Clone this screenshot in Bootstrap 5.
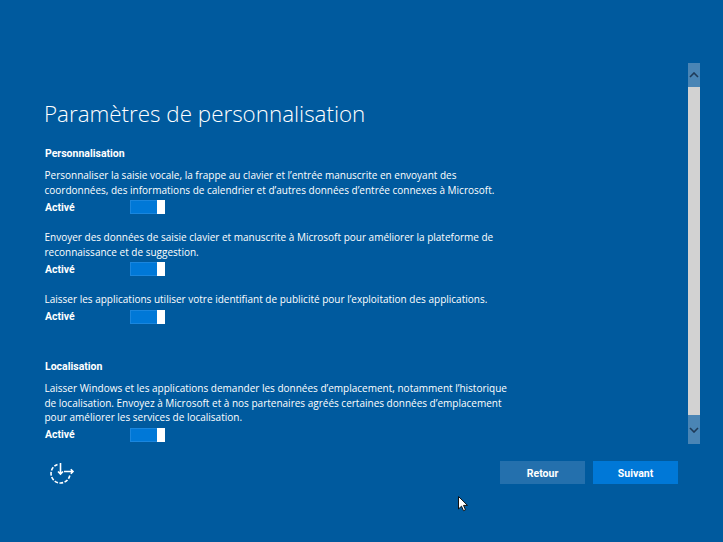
<!DOCTYPE html>
<html lang="fr"><head><meta charset="utf-8"><title>Paramètres</title>
<link href="https://cdn.jsdelivr.net/npm/bootstrap@5.3.0/dist/css/bootstrap.min.css" rel="stylesheet">
<style>
html,body{height:542px;overflow:hidden}
body{background:#005a9e;color:#fff;font-family:"Open Sans",sans-serif;font-size:10px;line-height:14.5px}
.oobe{height:542px;padding:63px 23px 0 44px}
.upper{height:381px}
.pane{width:644px;padding-top:36px}
.ttl{font-size:22.4px;font-weight:300;line-height:30px;margin:0 0 17px;white-space:nowrap}
.sect{font-family:Roboto,sans-serif;font-size:10.5px;font-weight:700;line-height:15px;margin:0 0 7px;padding-left:1px}
.sect.gap{margin-bottom:7.500px}
.para{margin:0 0 3px;white-space:nowrap;padding-left:.5px}
.opt{height:14px;margin-bottom:16px}
.opt b{width:86px;font-family:Roboto,sans-serif;font-size:10.5px;padding:2px 0 0 1px}
.tog{width:35px;height:14px;border:1px solid #1a86de;background:#0078d7;padding:0}
.tog i{width:8px;height:14px;margin:-1px;background:#fff;display:block}
.tail{margin-bottom:35px}
.sbar{width:12px;background:#d2d2d2}
.sbtn{height:24px;background:#4a85b5;color:#1f3a57}
.sbtn.low{height:29px}
.sthumb{background:#d2d2d2}
.foot{height:23px;margin-top:17px;padding:0 22px 0 6px}
.act{width:85px;height:23px;border:0;border-radius:0;color:#fff;font-family:Roboto,sans-serif;font-size:10.5px;font-weight:700;padding:2px 0 0;line-height:21px}
.act.back,.act.back:hover{background:#2470ad;color:#fff}
.act.next,.act.next:hover{background:#0078d7;color:#fff}
.ptr{position:absolute;left:458px;top:496px}
</style></head>
<body class="position-relative">
<div class="oobe d-flex flex-column">
  <div class="upper d-flex">
    <div class="pane">
      <h1 class="ttl">Paramètres de personnalisation</h1>
      <div class="sect">Personnalisation</div>
      <p class="para">Personnaliser la saisie vocale, la frappe au clavier et l’entrée manuscrite en envoyant des<br>coordonnées, des informations de calendrier et d’autres données d’entrée connexes à Microsoft.</p>
      <div class="opt d-flex align-items-center"><b>Activé</b><span class="tog d-flex justify-content-end"><i></i></span></div>
      <p class="para">Envoyer des données de saisie clavier et manuscrite à Microsoft pour améliorer la plateforme de<br>reconnaissance et de suggestion.</p>
      <div class="opt d-flex align-items-center"><b>Activé</b><span class="tog d-flex justify-content-end"><i></i></span></div>
      <p class="para">Laisser les applications utiliser votre identifiant de publicité pour l’exploitation des applications.</p>
      <div class="opt tail d-flex align-items-center"><b>Activé</b><span class="tog d-flex justify-content-end"><i></i></span></div>
      <div class="sect gap">Localisation</div>
      <p class="para">Laisser Windows et les applications demander les données d’emplacement, notamment l’historique<br>de localisation. Envoyez à Microsoft et à nos partenaires agréés certaines données d’emplacement<br>pour améliorer les services de localisation.</p>
      <div class="opt d-flex align-items-center"><b>Activé</b><span class="tog d-flex justify-content-end"><i></i></span></div>
    </div>
    <div class="sbar d-flex flex-column">
      <div class="sbtn d-flex align-items-center justify-content-center"><svg width="10" height="6" viewBox="0 0 10 6"><path d="M1 5l4-4 4 4" fill="none" stroke="currentColor" stroke-width="1.6"/></svg></div>
      <div class="sthumb flex-grow-1"></div>
      <div class="sbtn low d-flex align-items-center justify-content-center"><svg width="10" height="6" viewBox="0 0 10 6"><path d="M1 1l4 4 4-4" fill="none" stroke="currentColor" stroke-width="1.6"/></svg></div>
    </div>
  </div>
  <div class="foot d-flex align-items-center justify-content-between">
    <svg width="26" height="24" viewBox="0 0 26 24" fill="none" stroke="#fff" stroke-width="1.600">
      <path d="M7.500 3.500A9.500 9.500 0 1 0 19.800 14.500" stroke-dasharray="3.600 1.500"/>
      <path d="M10.500 2v11M8 10.500L10.500 13 13 10.500M14 10.500h9M20.800 8.300L23 10.500 20.800 12.700"/>
    </svg>
    <div class="d-flex gap-2">
      <button class="btn act back" type="button">Retour</button>
      <button class="btn act next" type="button">Suivant</button>
    </div>
  </div>
</div>
<svg class="ptr" width="11" height="16" viewBox="0 0 11 16"><path d="M.5.500v12.500l3-2.800 2 4.500 2-.9-2-4.400h4z" fill="#fff" stroke="#111" stroke-width="1"/></svg>
</body></html>
